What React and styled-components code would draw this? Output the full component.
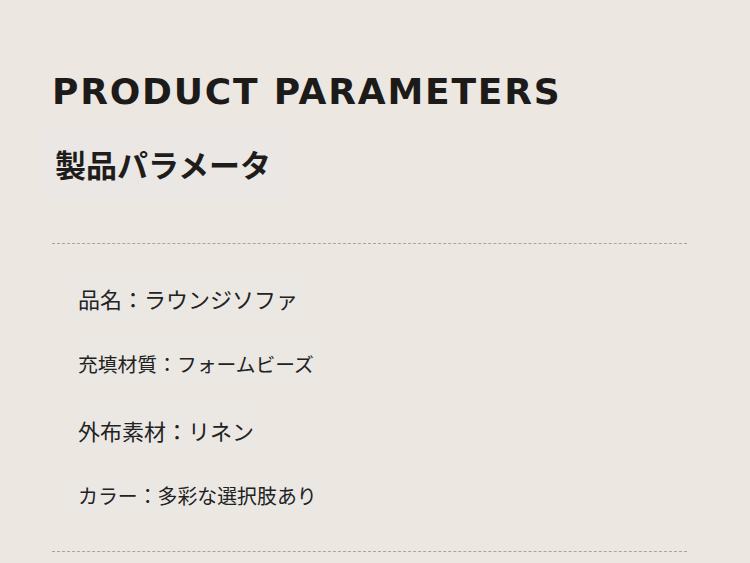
import React from 'react';
import styled, { createGlobalStyle } from 'styled-components';

const Global = createGlobalStyle`
    html, body {
        margin: 0;
        padding: 0;
        background: #ede7e1;
    }
`;

const Page = styled.div`
    width: 750px;
    height: 563px;
    overflow: hidden;
    background: #ede7e1;
    padding: 70px 63px 0 52px;
    box-sizing: border-box;
    font-family: "Noto Sans CJK JP", "Noto Sans", sans-serif;
    color: #1f1d1c;
`;

const Title = styled.h1`
    margin: 0;
    font-family: "DejaVu Sans", sans-serif;
    font-weight: bold;
    font-size: 36px;
    line-height: 44px;
    letter-spacing: 1.8px;
    color: #1c1b1a;
`;

const SubBox = styled.div`
    display: inline-block;
    margin: 14px 0 0 -10px;
    padding: 15px 18px 16px 13px;
    background: #eae7e4;
`;

const Subtitle = styled.h2`
    margin: 0;
    font-size: 31px;
    line-height: 42px;
    font-weight: bold;
    color: #1f1d1c;
`;

const Divider = styled.hr`
    margin: ${(p) => p.top || 0}px 0 0;
    border: none;
    border-top: 1px dashed #a9a49f;
    height: 0;
`;

const List = styled.div`
    display: flex;
    flex-direction: column;
    align-items: flex-start;
    gap: 20px;
    margin-top: 31px;
    padding-left: 18px;
`;

const Item = styled.div`
    padding: 8px;
    background: #ebe8e4;
    font-size: ${(p) => p.size}px;
    line-height: 30px;
    color: #222;
`;

const items = [
    { text: '品名：ラウンジソファ', size: 22 },
    { text: '充填材質：フォームビーズ', size: 19.8 },
    { text: '外布素材：リネン', size: 22 },
    { text: 'カラー：多彩な選択肢あり', size: 19.9 },
];

export default function App() {
    return (
        <Page>
            <Global />
            <Title>PRODUCT PARAMETERS</Title>
            <SubBox>
                <Subtitle>製品パラメータ</Subtitle>
            </SubBox>
            <Divider top={42} />
            <List>
                {items.map((it) => (
                    <Item key={it.text} size={it.size}>{it.text}</Item>
                ))}
            </List>
            <Divider top={32} />
        </Page>
    );
}
